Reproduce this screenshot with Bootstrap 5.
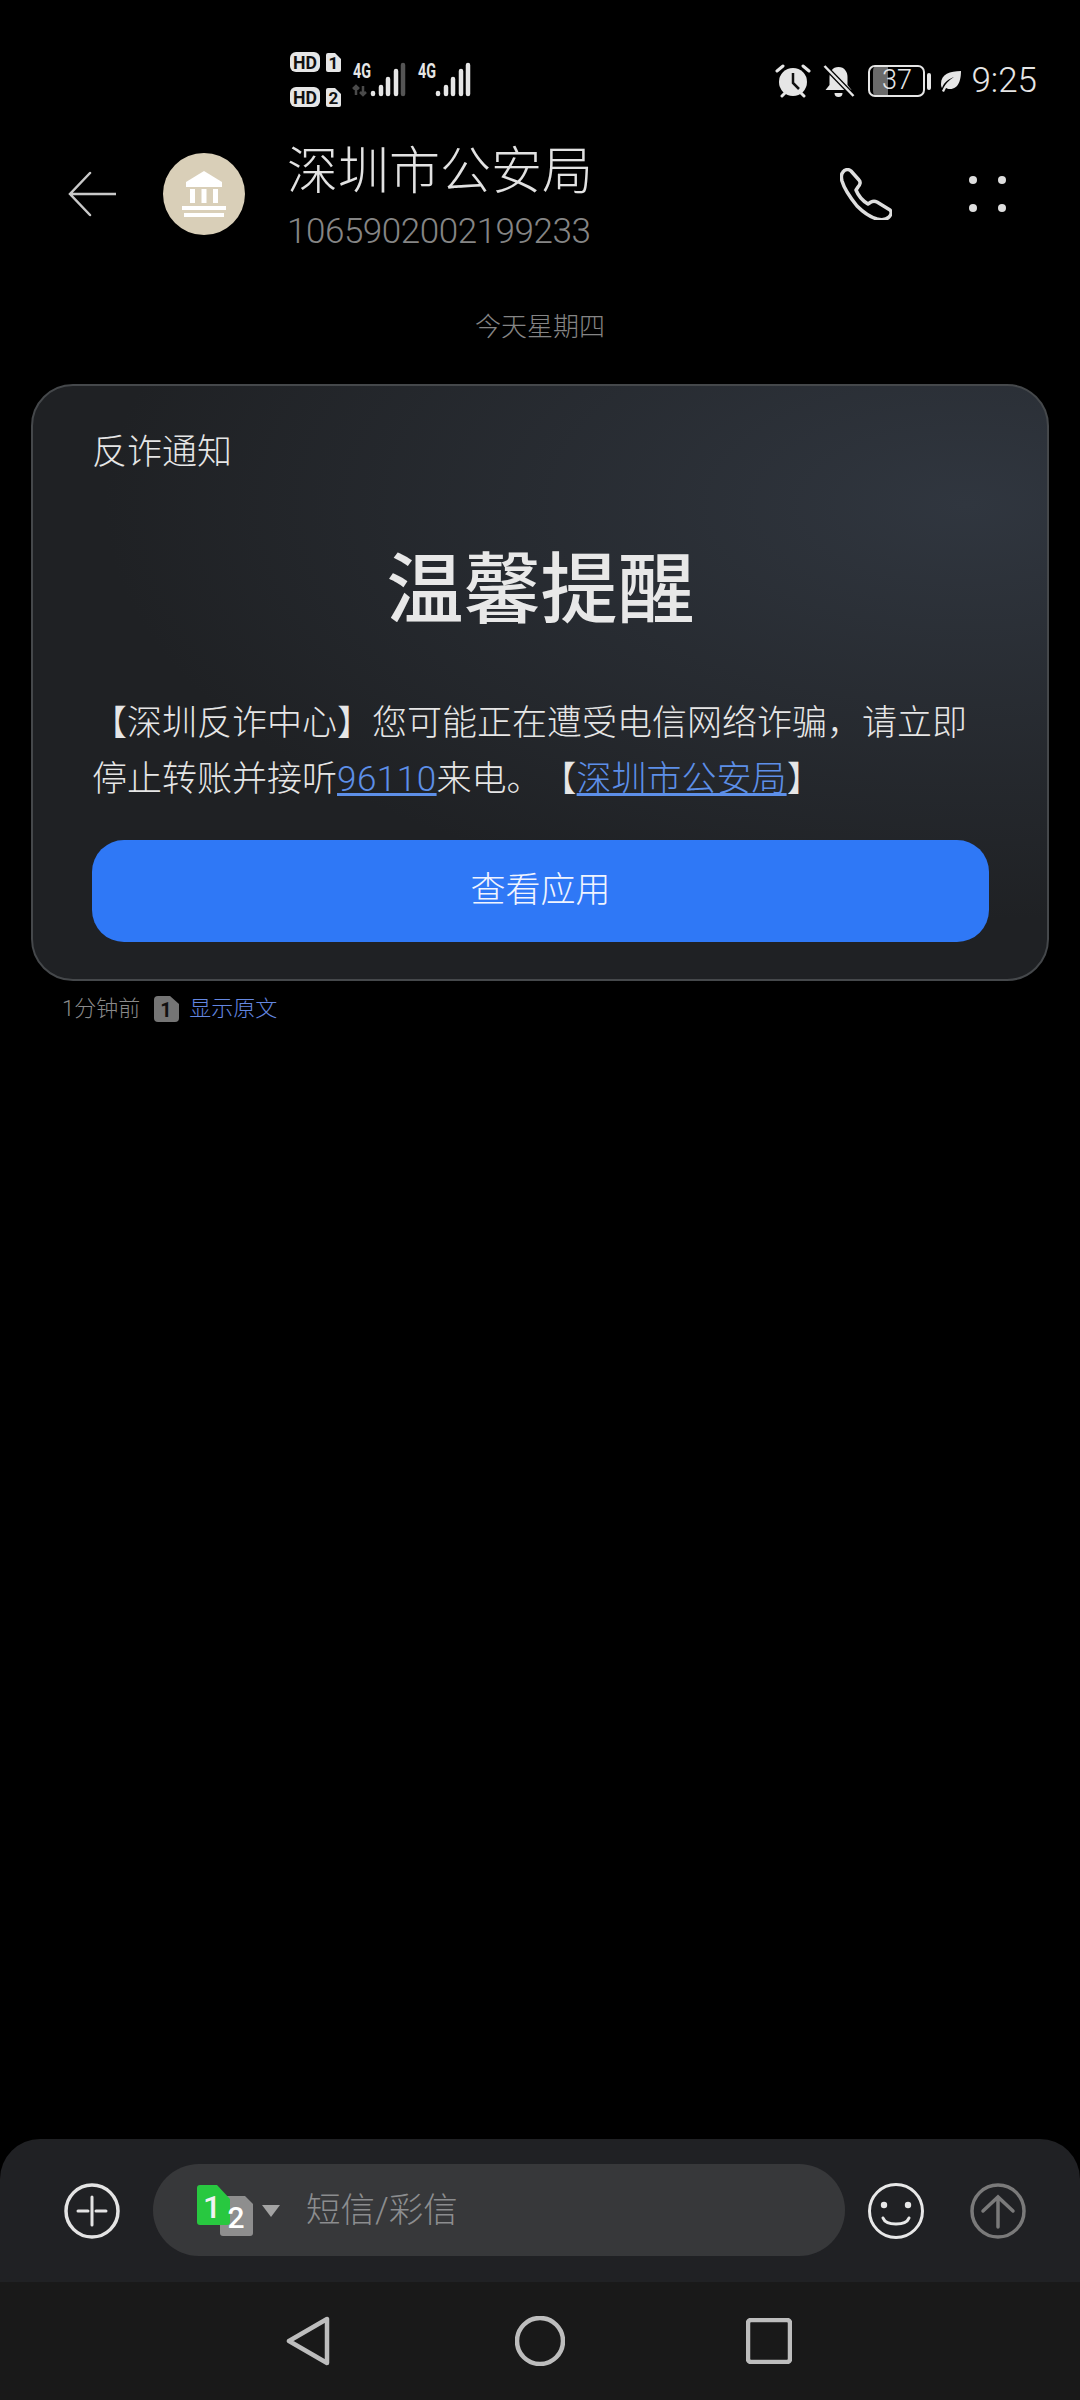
<!DOCTYPE html>
<html lang="zh-CN">
  <head>
    <meta charset="UTF-8" />
    <meta name="viewport" content="width=device-width, initial-scale=1.0" />
    <title>深圳市公安局</title>
    <link
      href="https://cdn.jsdelivr.net/npm/bootstrap@5.3.3/dist/css/bootstrap.min.css"
      rel="stylesheet"
    />
    <style>
      body {
        background: #000;
        color: #e6e6e6;
        font-family: Roboto, "Noto Sans CJK SC", sans-serif;
        font-weight: 300;
        text-spacing-trim: space-all;
      }
      svg text {
        font-family: Roboto, sans-serif;
        font-weight: 700;
      }
      svg text.sim-num {
        font-weight: 500;
      }
      .phone-screen {
        width: 1080px;
        height: 2400px;
        overflow: hidden;
      }
      .status-row {
        height: 130px;
        padding: 50px 43px 0 290px;
      }
      .status-icons {
        height: 62px;
        gap: 13px;
      }
      .bell-icon {
        margin-left: -2px;
      }
      .battery-box {
        width: 57px;
        height: 32px;
        border: 2.5px solid #e6e6e6;
        border-radius: 7px;
        font-size: 27px;
        line-height: 27px;
        text-align: center;
        background: linear-gradient(to right, #6a6a6a 0, #6a6a6a 15px, transparent 15px);
        background-origin: content-box;
        background-clip: content-box;
        padding: 0 3px;
      }
      .battery-tip {
        width: 4px;
        height: 17px;
        border-radius: 2px;
        background: #e6e6e6;
        margin-left: -11px;
      }
      .leaf-icon {
        margin-left: -4px;
      }
      .clock-text {
        font-size: 35px;
        line-height: 40px;
        margin-left: -3px;
      }
      .top-bar {
        height: 128px;
        padding-left: 68px;
      }
      .contact-pic {
        width: 82px;
        height: 82px;
        margin-left: 47px;
        margin-right: 42px;
      }
      .contact-info {
        margin-top: 16px;
      }
      .contact-name {
        font-size: 51px;
        line-height: 60px;
        color: #e2e2e2;
      }
      .contact-num {
        font-size: 35px;
        line-height: 60px;
        color: #858585;
        letter-spacing: -0.45px;
      }
      .call-btn {
        margin-left: auto;
        margin-right: 77px;
      }
      .more-btn {
        margin-right: 73px;
      }
      .date-label {
        margin-top: 49px;
        font-size: 26px;
        line-height: 40px;
        color: #858585;
      }
      .sms-card {
        height: 597px;
        margin: 37px 31px 0;
        padding: 47px 58px 0 59px;
        background: radial-gradient(ellipse 85% 70% at 92% 20%, #30363f 0%, rgba(48, 54, 63, 0) 100%), #1f2124;
        border: 2px solid #45484b;
        border-radius: 42px;
        color: #e6e6e6;
      }
      .sms-tag {
        font-size: 35px;
        line-height: 40px;
      }
      .sms-title {
        margin-top: 73px;
        font-size: 77px;
        line-height: 90px;
        font-weight: 500;
        color: #e8e8e8;
      }
      .sms-body {
        margin-top: 60px;
        font-size: 35px;
        line-height: 56px;
      }
      .sms-body a {
        color: #5d8fe8;
      }
      .phone-link {
        letter-spacing: 0.5px;
      }
      .view-btn {
        margin-top: 32px;
        height: 102px;
        font-size: 35px;
        font-weight: 300;
        color: #f0f4ff;
        background: #2f78f6;
        border: 0;
        border-radius: 32px;
      }
      .meta-row {
        margin-top: 13px;
        padding-left: 62px;
        height: 30px;
        font-size: 22px;
        line-height: 30px;
        color: #8a8a8a;
      }
      .sim-tag {
        margin-left: 14px;
        margin-right: 10px;
      }
      .show-raw {
        color: #6487e0;
      }
      .compose-bar {
        height: 143px;
        padding-left: 64px;
        background: #202124;
        border-radius: 40px 40px 0 0;
      }
      .compose-pill {
        width: 692px;
        height: 92px;
        margin-left: 33px;
        margin-right: 23px;
        margin-bottom: 1px;
        padding-left: 44px;
        background: #37383a;
        border-radius: 46px;
      }
      .compose-hint {
        margin-left: 26px;
        margin-top: 2px;
        font-size: 34.5px;
        color: #8c8d8f;
      }
      .send-icon {
        margin-right: 54px;
      }
      .nav-strip {
        height: 118px;
        background: #191919;
      }
      .nav-back {
        margin-left: 286px;
      }
      .nav-home {
        margin-left: 185px;
      }
      .nav-recent {
        margin-left: 181px;
      }
    </style>
  </head>
  <body class="m-0">
    <div class="phone-screen d-flex flex-column">
      <!-- status bar -->
      <div class="status-row d-flex align-items-start">
        <svg width="182" height="60" viewBox="0 0 182 60">
          <rect x="0" y="2" width="30" height="20" rx="6" fill="#e6e6e6" />
          <text x="15" y="18.500" font-size="18" textLength="24" lengthAdjust="spacingAndGlyphs" text-anchor="middle" fill="#111">HD</text>
          <path d="M38 3h7l6 6v11a2 2 0 0 1-2 2H38a2 2 0 0 1-2-2V5a2 2 0 0 1 2-2z" fill="#e6e6e6" />
          <text x="43.500" y="19" font-size="17" text-anchor="middle" fill="#111">1</text>
          <rect x="0" y="37" width="30" height="20" rx="6" fill="#e6e6e6" />
          <text x="15" y="53.500" font-size="18" textLength="24" lengthAdjust="spacingAndGlyphs" text-anchor="middle" fill="#111">HD</text>
          <path d="M38 38h7l6 6v11a2 2 0 0 1-2 2H38a2 2 0 0 1-2-2V40a2 2 0 0 1 2-2z" fill="#e6e6e6" />
          <text x="43.500" y="54" font-size="17" text-anchor="middle" fill="#111">2</text>

          <text x="63" y="28" font-size="21" textLength="18" lengthAdjust="spacingAndGlyphs" fill="#e6e6e6">4G</text>
          <path d="M66 45v-9m-3 3l3-3 3 3M73 36v9m-3-3l3 3 3-3" fill="none" stroke="#4a4a4a" stroke-width="2.500" />
          <g stroke="#e6e6e6" stroke-width="4.500" stroke-linecap="round">
            <path d="M83 43v1M91 37v7M98 29v15M106 21v23" />
            <path d="M113 15v29" stroke="#555" />
          </g>
          <text x="128" y="28" font-size="21" textLength="18" lengthAdjust="spacingAndGlyphs" fill="#e6e6e6">4G</text>
          <g stroke="#e6e6e6" stroke-width="4.500" stroke-linecap="round">
            <path d="M148 43v1M156 37v7M163 29v15M171 21v23M178 15v29" />
          </g>
        </svg>
        <div class="status-icons d-flex align-items-center ms-auto">
          <svg width="36" height="36" viewBox="0 0 36 36">
            <circle cx="18" cy="19" r="14" fill="#e6e6e6" />
            <path d="M18 10v10l6 6" fill="none" stroke="#111" stroke-width="2.500" />
            <path d="M2 8l6-5M34 8l-6-5M7 33l3-3M29 33l-3-3" stroke="#e6e6e6" stroke-width="3" stroke-linecap="round" />
          </svg>
          <svg class="bell-icon" width="33" height="34" viewBox="0 0 32 34">
            <path d="M16 3c-6 0-9 5-9 10v8l-4 5h26l-4-5v-8c0-5-3-10-9-10z" fill="#e6e6e6" />
            <path d="M12 29a4 4 0 0 0 8 0z" fill="#e6e6e6" />
            <path d="M1 1l30 31" stroke="#000" stroke-width="5" />
            <path d="M2 2l29 30" stroke="#e6e6e6" stroke-width="2.500" />
          </svg>
          <div class="battery-box">37</div>
          <div class="battery-tip"></div>
          <svg class="leaf-icon" width="21" height="21" viewBox="0 0 21 21">
            <path d="M21 0C10 0 1 3 1 13c0 2 .5 3 1 4C4 11 9 8 14 6 9 9 5 13 2 20l2 1 2-4c1 .5 2 1 4 1C19 18 21 8 21 0z" fill="#e6e6e6" />
          </svg>
          <div class="clock-text">9:25</div>
        </div>
      </div>

      <!-- contact header -->
      <div class="top-bar d-flex align-items-center">
        <svg width="48" height="46" viewBox="0 0 48 46">
          <path d="M22 2L2 23l20 21M2 23h46" fill="none" stroke="#c9c9c9" stroke-width="2.500" stroke-linecap="round" />
        </svg>
        <svg class="contact-pic" viewBox="0 0 82 82">
          <circle cx="41" cy="41" r="41" fill="#d9cfb8" />
          <path d="M41 18l18 11v5H23v-5z" fill="#fff" />
          <path d="M27 36h5v14h-5zM38.500 36h5v14h-5zM50 36h5v14h-5z" fill="#fff" />
          <rect x="19" y="53" width="44" height="4" fill="#fff" />
          <rect x="21" y="60" width="40" height="4" fill="#fff" />
        </svg>
        <div class="contact-info">
          <div class="contact-name">深圳市公安局</div>
          <div class="contact-num">1065902002199233</div>
        </div>
        <svg class="call-btn" width="52" height="52" viewBox="0 0 52 52">
          <path d="M3 4c2-3 6-3 8-1l8 9c2 2 1 5-1 7l-2 3c2 5 7 11 12 14l3-2c2-1 4-1 6 0l13 8c2 2 1 5-1 7-3 3-8 3-12 2-7-2-14-7-20-13C9 28 4 20 2 13 1 9 1 6 3 4z" fill="none" stroke="#dedede" stroke-width="3.500" stroke-linejoin="round" />
        </svg>
        <svg class="more-btn" width="38" height="38" viewBox="0 0 38 38">
          <circle cx="4" cy="5" r="4" fill="#dedede" />
          <circle cx="33" cy="5" r="4" fill="#dedede" />
          <circle cx="4" cy="33" r="4" fill="#dedede" />
          <circle cx="33" cy="33" r="4" fill="#dedede" />
        </svg>
      </div>

      <div class="date-label text-center">今天星期四</div>

      <!-- message card -->
      <div class="sms-card">
        <div class="sms-tag">反诈通知</div>
        <div class="sms-title text-center">温馨提醒</div>
        <div class="sms-body">
          【深圳反诈中心】您可能正在遭受电信网络诈骗，请立即停止转账并接听<a class="phone-link" href="#">96110</a>来电。【<a href="#">深圳市公安局</a>】
        </div>
        <button class="view-btn btn btn-primary w-100 d-block">查看应用</button>
      </div>

      <div class="meta-row d-flex align-items-center">
        <span>1分钟前</span>
        <svg class="sim-tag" width="25" height="26" viewBox="0 0 25 26">
          <path d="M4 0h12l9 8v14a4 4 0 0 1-4 4H4a4 4 0 0 1-4-4V4a4 4 0 0 1 4-4z" fill="#757575" />
          <text x="12" y="21" font-size="20" text-anchor="middle" fill="#111">1</text>
        </svg>
        <span class="show-raw">显示原文</span>
      </div>

      <div class="flex-grow-1"></div>

      <!-- compose box -->
      <div class="compose-bar d-flex align-items-center">
        <svg width="56" height="56" viewBox="0 0 56 56">
          <circle cx="28" cy="28" r="26" fill="none" stroke="#e4e4e4" stroke-width="3.500" />
          <path d="M14 28h10M32 28h10M28 14v28" stroke="#e4e4e4" stroke-width="3" stroke-linecap="round" />
        </svg>
        <div class="compose-pill d-flex align-items-center">
          <svg width="83" height="51" viewBox="0 0 83 51">
            <path d="M26 11h22l8 8v29a3 3 0 0 1-3 3H26a3 3 0 0 1-3-3V14a3 3 0 0 1 3-3z" fill="#8e8e8e" />
            <path d="M3 0h17l13 14v23a3 3 0 0 1-3 3H3a3 3 0 0 1-3-3V3a3 3 0 0 1 3-3z" fill="#28c840" />
            <text class="sim-num" x="15" y="33" font-size="32" text-anchor="middle" fill="#f2f2f2">1</text>
            <text class="sim-num" x="39" y="43" font-size="30" text-anchor="middle" fill="#fff">2</text>
            <path d="M65 20h18l-9 12z" fill="#a3a3a3" />
          </svg>
          <span class="compose-hint">短信/彩信</span>
        </div>
        <svg width="56" height="56" viewBox="0 0 56 56">
          <circle cx="28" cy="28" r="26.500" fill="none" stroke="#e8e8e8" stroke-width="3" />
          <circle cx="16" cy="22" r="3.200" fill="#e8e8e8" />
          <circle cx="40" cy="22" r="3.200" fill="#e8e8e8" />
          <path d="M15 35c3 8 23 8 26 0" fill="none" stroke="#e8e8e8" stroke-width="3" stroke-linecap="round" />
        </svg>
        <svg class="send-icon ms-auto" width="56" height="56" viewBox="0 0 56 56">
          <circle cx="28" cy="28" r="26" fill="none" stroke="#7a7a7a" stroke-width="3.500" />
          <path d="M28 44V15M13 28l15-14 15 14" fill="none" stroke="#7a7a7a" stroke-width="3.500" stroke-linecap="round" />
        </svg>
      </div>

      <!-- navigation bar -->
      <div class="nav-strip d-flex align-items-center">
        <svg class="nav-back" width="44" height="50" viewBox="0 0 44 50">
          <path d="M41 3v44L3 25z" fill="none" stroke="#bdbdbd" stroke-width="4.500" stroke-linejoin="round" />
        </svg>
        <svg class="nav-home" width="50" height="50" viewBox="0 0 50 50">
          <circle cx="25" cy="25" r="23" fill="none" stroke="#bdbdbd" stroke-width="4.500" />
        </svg>
        <svg class="nav-recent" width="46" height="46" viewBox="0 0 46 46">
          <rect x="2" y="2" width="42" height="42" rx="3" fill="none" stroke="#bdbdbd" stroke-width="4.500" />
        </svg>
      </div>
    </div>
    <script src="https://cdn.jsdelivr.net/npm/bootstrap@5.3.3/dist/js/bootstrap.bundle.min.js"></script>
  </body>
</html>
